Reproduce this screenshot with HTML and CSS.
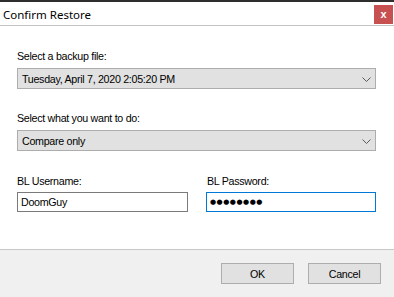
FILE: index.html
```html
<!DOCTYPE html>
<html>
<head>
<meta charset="utf-8">
<link rel="stylesheet" href="styles.css">
</head>
<body>
<div class="window">
  <div class="titlebar">
    <span class="title">Confirm Restore</span>
    <span class="close">x</span>
  </div>
  <div class="content">
    <div class="label first">Select a backup file:</div>
    <div class="combo">
      <span>Tuesday, April 7, 2020 2:05:20 PM</span>
      <svg class="chev" width="9" height="5" viewBox="0 0 9 5"><path d="M0.5 0.5 L4.5 4.5 L8.5 0.5" fill="none" stroke="#5a5a5a" stroke-width="1"/></svg>
    </div>
    <div class="label">Select what you want to do:</div>
    <div class="combo">
      <span>Compare only</span>
      <svg class="chev" width="9" height="5" viewBox="0 0 9 5"><path d="M0.5 0.5 L4.5 4.5 L8.5 0.5" fill="none" stroke="#5a5a5a" stroke-width="1"/></svg>
    </div>
    <div class="creds">
      <div class="field">
        <div class="label small">BL Username:</div>
        <div class="textbox">DoomGuy</div>
      </div>
      <div class="field pw">
        <div class="label small">BL Password:</div>
        <div class="textbox focused"><span class="dots">●●●●●●●●</span></div>
      </div>
    </div>
  </div>
  <div class="footer">
    <div class="btn">OK</div>
    <div class="btn">Cancel</div>
  </div>
</div>
</body>
</html>
```
FILE: styles.css
```css
html, body {
  margin: 0;
  padding: 0;
  background: #ffffff;
}
.window {
  width: 394px;
  height: 297px;
  display: flex;
  flex-direction: column;
  font-family: "Liberation Sans", Arial, sans-serif;
  font-size: 10.7px;
  letter-spacing: -0.3px;
  color: #000;
  overflow: hidden;
}
.titlebar {
  border-top: 2px solid #2e2e2e;
  height: 23px;
  border-bottom: 1px solid #c3c3c3;
  display: flex;
  align-items: center;
  justify-content: space-between;
  background: #fff;
}
.title {
  font-family: "Noto Sans", "Open Sans", sans-serif;
  font-size: 11.5px;
  letter-spacing: 0;
  padding-left: 3px;
  margin-top: 1px;
}
.close {
  width: 19px;
  height: 19px;
  margin-right: 1px;
  margin-top: 2px;
  background: #c75050;
  color: #fff;
  font-family: "Liberation Sans", sans-serif;
  font-weight: bold;
  font-size: 11px;
  letter-spacing: 0;
  display: flex;
  align-items: center;
  justify-content: center;
  line-height: 1;
  padding-bottom: 1px;
  box-sizing: border-box;
}
.content {
  flex: 1;
  padding: 0 18px 0 17px;
  display: flex;
  flex-direction: column;
}
.label {
  line-height: 13px;
  height: 13px;
  margin-top: 23px;
  margin-bottom: 5px;
}
.label.first {
  margin-top: 24px;
}
.combo {
  height: 21px;
  box-sizing: border-box;
  border: 1px solid #adadad;
  background: #e1e1e1;
  display: flex;
  align-items: center;
  justify-content: space-between;
  padding: 0 4px 0 4px;
}
.chev {
  margin-top: 1px;
}
.creds {
  display: grid;
  grid-template-columns: 171px 170px;
  column-gap: 18px;
}
.label.small {
  margin-top: 24px;
  margin-bottom: 4px;
}
.field.pw .label {
  padding-left: 1px;
}
.textbox {
  height: 20px;
  box-sizing: border-box;
  border: 1px solid #7a7a7a;
  background: #fff;
  display: flex;
  align-items: center;
  padding-left: 3px;
}
.textbox.focused {
  border-color: #0078d7;
}
.dots {
  font-family: "DejaVu Sans", sans-serif;
  font-size: 7px;
  letter-spacing: 0.5px;
}
.footer {
  height: 48px;
  box-sizing: border-box;
  border-top: 1px solid #c8c8c8;
  background: #f0f0f0;
  display: flex;
  justify-content: flex-end;
  align-items: flex-start;
  gap: 14px;
  padding: 13px 13px 0 0;
}
.btn {
  width: 73px;
  height: 21px;
  box-sizing: border-box;
  border: 1px solid #adadad;
  background: #e1e1e1;
  display: flex;
  align-items: center;
  justify-content: center;
}
```
